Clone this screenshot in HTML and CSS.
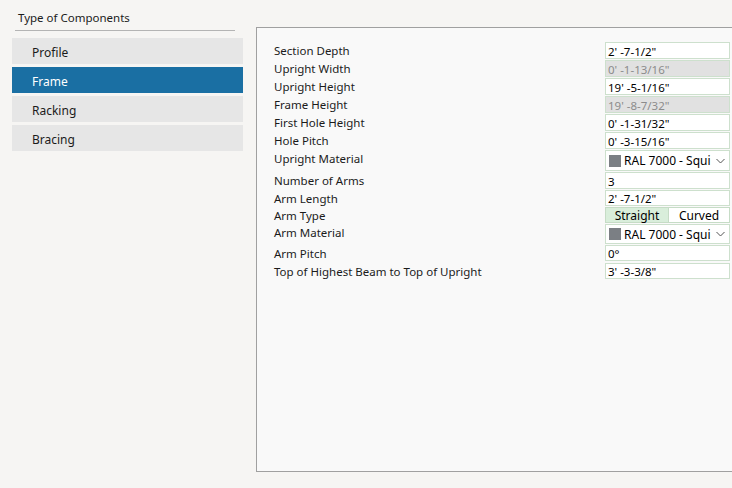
FILE: index.html
```html
<!DOCTYPE html>
<html>
<head>
<meta charset="utf-8">
<link rel="stylesheet" href="styles.css">
</head>
<body>
<div class="app">
  <aside class="sidebar">
    <div class="side-title">Type of Components</div>
    <div class="side-item">Profile</div>
    <div class="side-item active">Frame</div>
    <div class="side-item">Racking</div>
    <div class="side-item">Bracing</div>
  </aside>
  <main class="panel">
    <div class="form">
      <div class="row"><span class="label">Section Depth</span><div class="field">2' -7-1/2"</div></div>
      <div class="row"><span class="label">Upright Width</span><div class="field disabled">0' -1-13/16"</div></div>
      <div class="row"><span class="label">Upright Height</span><div class="field">19' -5-1/16"</div></div>
      <div class="row"><span class="label">Frame Height</span><div class="field disabled">19' -8-7/32"</div></div>
      <div class="row"><span class="label">First Hole Height</span><div class="field">0' -1-31/32"</div></div>
      <div class="row"><span class="label">Hole Pitch</span><div class="field">0' -3-15/16"</div></div>
      <div class="row"><span class="label">Upright Material</span>
        <div class="field select"><span class="swatch"></span><span class="sel-text">RAL 7000 - Squi</span>
          <svg class="chev" width="9" height="6" viewBox="0 0 9 6"><path d="M0.5 1 L4.5 5 L8.5 1" fill="none" stroke="#555" stroke-width="1"/></svg>
        </div>
      </div>
      <div class="row"><span class="label">Number of Arms</span><div class="field">3</div></div>
      <div class="row"><span class="label">Arm Length</span><div class="field short">2' -7-1/2"</div></div>
      <div class="row"><span class="label">Arm Type</span>
        <div class="segmented"><span class="seg on">Straight</span><span class="seg">Curved</span></div>
      </div>
      <div class="row"><span class="label">Arm Material</span>
        <div class="field select small"><span class="swatch"></span><span class="sel-text">RAL 7000 - Squi</span>
          <svg class="chev" width="9" height="6" viewBox="0 0 9 6"><path d="M0.5 1 L4.5 5 L8.5 1" fill="none" stroke="#555" stroke-width="1"/></svg>
        </div>
      </div>
      <div class="row gap2"><span class="label">Arm Pitch</span><div class="field short">0°</div></div>
      <div class="row"><span class="label">Top of Highest Beam to Top of Upright</span><div class="field short">3' -3-3/8"</div></div>
    </div>
  </main>
</div>
</body>
</html>
```

FILE: styles.css
```css
html, body {
  margin: 0;
  padding: 0;
  background: #f6f5f3;
  overflow: hidden;
}
body {
  width: 732px;
  height: 488px;
  font-family: "Noto Sans", "Open Sans", sans-serif;
  font-size: 11.5px;
  color: #1b1b1b;
}
.app {
  display: flex;
  align-items: flex-start;
  height: 488px;
}
.sidebar {
  width: 231px;
  margin-left: 12px;
  padding-top: 10px;
  flex: none;
}
.side-title {
  margin: 0 8px 7px 3px;
  padding: 0 0 4px 3px;
  line-height: 16px;
  border-bottom: 1px solid #b4b4b4;
}
.side-item {
  box-sizing: border-box;
  height: 26px;
  line-height: 23px;
  padding-top: 3px;
  margin-bottom: 3px;
  padding-left: 20px;
  background: #e6e6e6;
  font-size: 12px;
}
.side-item.active {
  background: #1a6fa3;
  color: #ffffff;
}
.panel {
  box-sizing: border-box;
  flex: 1;
  margin-left: 13px;
  margin-top: 27px;
  height: 445px;
  border: 1px solid #a0a0a0;
  border-right: none;
  background: #f9f9f9;
  padding: 14px 2px 0 17px;
}
.form {
  display: flex;
  flex-direction: column;
}
.row {
  display: flex;
  align-items: flex-start;
  justify-content: space-between;
  margin-bottom: 1px;
}
.row.gap2 {
  margin-bottom: 2px;
}
.label {
  line-height: 16px;
  padding-top: 1px;
  margin-bottom: -2px;
}
.field {
  box-sizing: border-box;
  width: 125px;
  height: 17px;
  line-height: 15px;
  padding-top: 1px;
  border: 1px solid #cde0cd;
  background: #ffffff;
  color: #000;
  padding-left: 2px;
  white-space: nowrap;
  overflow: hidden;
}
.field.short {
  height: 16px;
  line-height: 14px;
}
.field.disabled {
  background: #e1e1e1;
  color: #8c8c8c;
}
.field.select {
  height: 21px;
  display: flex;
  align-items: center;
  padding-left: 3px;
  padding-top: 0;
}
.field.select.small {
  height: 20px;
}
.swatch {
  width: 12px;
  height: 12px;
  background: #7b7f84;
  margin-right: 3px;
  flex: none;
}
.sel-text {
  flex: 1;
  line-height: 16px;
  font-size: 12px;
  padding-top: 1px;
}
.chev {
  margin-right: 4px;
  flex: none;
}
.segmented {
  box-sizing: border-box;
  width: 125px;
  height: 16px;
  display: flex;
  border: 1px solid #c6dcc6;
  background: #ffffff;
  font-size: 12px;
}
.seg {
  flex: 1;
  text-align: center;
  line-height: 14px;
  color: #000;
  padding-top: 1px;
}
.seg.on {
  background: #d9eedb;
  border-right: 1px solid #c6dcc6;
  flex: none;
  width: 62px;
}
```
